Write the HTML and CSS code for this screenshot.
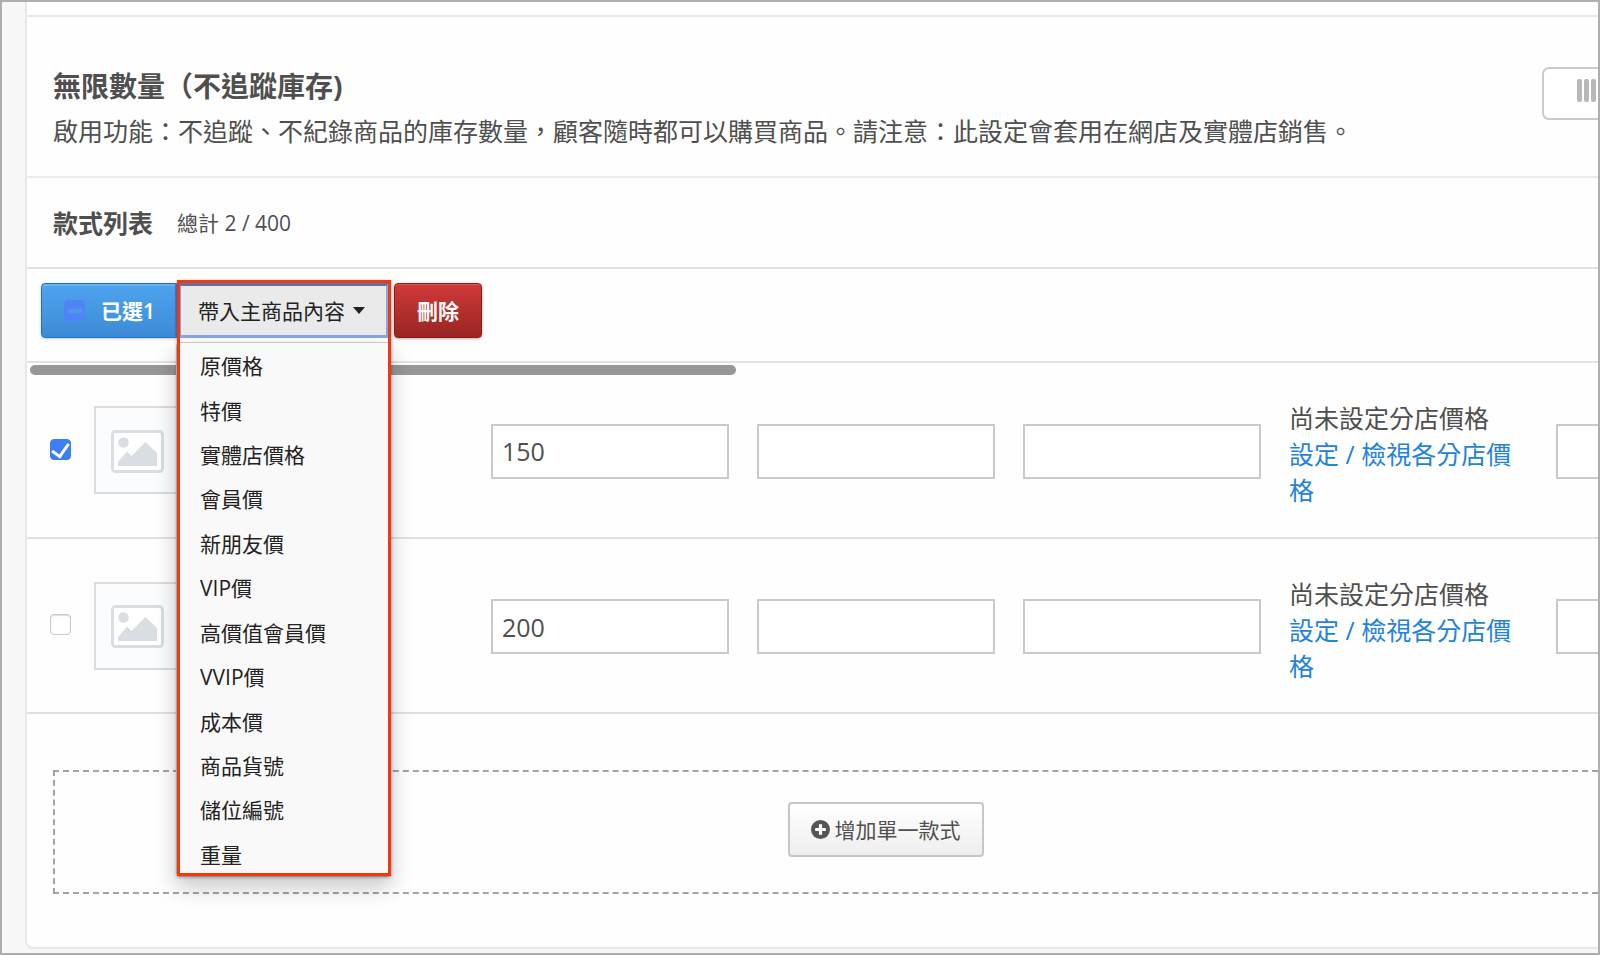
FILE: index.html
```html
<!DOCTYPE html>
<html lang="zh-Hant">
<head>
  <meta charset="UTF-8">
  <meta name="viewport" content="width=device-width, initial-scale=1.0">
  <title>款式列表</title>
  <link rel="stylesheet" href="styles.css">
</head>
<body>
  <svg class="sprite" aria-hidden="true">
    <symbol id="picture" viewBox="0 0 53 43">
      <rect x="1.5" y="1.5" width="50" height="40" rx="3" fill="#fff" stroke="#d9dee4" stroke-width="3"/>
      <circle cx="12.500" cy="12.500" r="5.300" fill="#d9dee4"/>
      <path d="M7 36V32L16 21.500L20.500 26L34.500 12L46 23V36Z" fill="#d9dee4"/>
    </symbol>
  </svg>
  <div class="frame">
    <main class="card">
      <div class="previous"></div>
      <section class="unlimited">
        <div>
          <h2 id="unlimited-title">無限數量（不追蹤庫存)</h2>
          <p>啟用功能：不追蹤、不紀錄商品的庫存數量，顧客隨時都可以購買商品。請注意：此設定會套用在網店及實體店銷售。</p>
        </div>
        <button class="switch" type="button" role="switch" aria-checked="false" aria-labelledby="unlimited-title">
          <span></span><span></span><span></span>
        </button>
      </section>

      <section class="list-head">
        <h3>款式列表</h3>
        <span>總計 2 / 400</span>
      </section>

      <div class="toolbar">
        <label class="btn btn-primary"><input class="partial" type="checkbox">已選1</label>
        <div class="dropdown">
          <button class="btn btn-toggle" type="button" aria-expanded="true">帶入主商品內容<span class="caret"></span></button>
          <ul class="menu">
            <li><a href="#">原價格</a></li>
            <li><a href="#">特價</a></li>
            <li><a href="#">實體店價格</a></li>
            <li><a href="#">會員價</a></li>
            <li><a href="#">新朋友價</a></li>
            <li><a href="#">VIP價</a></li>
            <li><a href="#">高價值會員價</a></li>
            <li><a href="#">VVIP價</a></li>
            <li><a href="#">成本價</a></li>
            <li><a href="#">商品貨號</a></li>
            <li><a href="#">儲位編號</a></li>
            <li><a href="#">重量</a></li>
          </ul>
          <div class="highlight"></div>
        </div>
        <button class="btn btn-danger" type="button">刪除</button>
      </div>

      <div class="table-wrap">
        <div class="scroll-thumb"></div>
        <table class="variants">
          <colgroup>
            <col class="col-check">
            <col class="col-thumb">
            <col class="col-price">
            <col class="col-price">
            <col class="col-price">
            <col class="col-store">
            <col class="col-price">
          </colgroup>
          <tbody>
            <tr>
              <td class="check"><input type="checkbox" checked></td>
              <td><div class="thumb"><svg><use href="#picture"/></svg></div></td>
              <td><input class="field" type="text" value="150"></td>
              <td><input class="field" type="text"></td>
              <td><input class="field" type="text"></td>
              <td class="store">尚未設定分店價格<br><a href="#">設定 / 檢視各分店價格</a></td>
              <td><input class="field" type="text"></td>
            </tr>
            <tr>
              <td class="check"><input type="checkbox"></td>
              <td><div class="thumb"><svg><use href="#picture"/></svg></div></td>
              <td><input class="field" type="text" value="200"></td>
              <td><input class="field" type="text"></td>
              <td><input class="field" type="text"></td>
              <td class="store">尚未設定分店價格<br><a href="#">設定 / 檢視各分店價格</a></td>
              <td><input class="field" type="text"></td>
            </tr>
          </tbody>
        </table>
      </div>

      <div class="add-box">
        <button class="btn btn-default" type="button">
          <svg viewBox="0 0 18 18"><circle cx="9" cy="9" r="9" fill="#555"/><path d="M9 4V14M4 9H14" stroke="#fff" stroke-width="3"/></svg>增加單一款式
        </button>
      </div>
    </main>
  </div>
</body>
</html>
```
FILE: styles.css
```css
* {
  margin: 0;
  padding: 0;
  box-sizing: border-box;
}

body {
  font-family: "Open Sans", "Noto Sans CJK TC", sans-serif;
  font-size: 25px;
  line-height: 36px;
  color: #4f4f4f;
}

button,
input {
  font: inherit;
  color: inherit;
}

a {
  color: #2383d9;
  text-decoration: none;
}

.sprite {
  display: none;
}

.frame {
  min-height: 100vh;
  border: 2px solid #aeaeae;
  padding: 0 0 4px 23px;
  background-color: #f7f7f7;
  overflow: hidden;
}

/* the card runs on past the right edge of the view */
.card {
  margin-right: -148px;
  border: 2px solid #e8e8e8;
  border-top: 0;
  border-radius: 0 0 8px 8px;
  background-color: #fefefe;
}

.previous {
  height: 15px;
  border-bottom: 2px solid #e8e8e8;
}

/* unlimited quantity */
.unlimited {
  display: flex;
  justify-content: space-between;
  align-items: flex-start;
  padding: 50px 26px 27px;
  border-bottom: 2px solid #ebebeb;
}
.unlimited h2 {
  font-size: 28px;
  line-height: 38px;
  font-weight: 700;
  margin-bottom: 8px;
}
.switch {
  display: flex;
  gap: 2px;
  width: 176px;
  height: 53px;
  padding: 10px 33px;
  border: 2px solid #cacaca;
  border-radius: 7px;
  background-color: #fff;
}
.switch span {
  width: 5px;
  height: 23px;
  border-radius: 2px;
  background-color: #b8b8b8;
}

/* list title */
.list-head {
  display: flex;
  align-items: center;
  gap: 24px;
  height: 91px;
  padding: 0 26px;
  border-bottom: 2px solid #e2e2e2;
  font-size: 21px;
}
.list-head h3 {
  font-size: 25px;
  font-weight: 700;
}

/* toolbar */
.toolbar {
  display: flex;
  padding: 14px;
  height: 94px;
  border-bottom: 2px solid #e2e2e2;
}
.btn {
  display: flex;
  align-items: center;
  height: 55px;
  padding: 0 21px;
  border: 2px solid #c6c6c6;
  border-radius: 4px;
  font-size: 21px;
  line-height: 30px;
  white-space: nowrap;
}
.btn-primary {
  gap: 16px;
  width: 137px;
  padding-left: 22px;
  border: 1px solid #1975b8;
  border-radius: 4px 0 0 4px;
  background-image: linear-gradient(#4ea4ef, #3d8ad6);
  box-shadow: inset 0 2px 0 #69b2f2, 0 1px 3px rgba(0, 0, 0, .2);
  color: #fff;
  font-weight: 600;
}
.partial {
  appearance: none;
  display: flex;
  align-items: center;
  justify-content: center;
  width: 21px;
  height: 21px;
  border-radius: 4px;
  background-color: #5084f6;
}
.partial::after {
  content: "";
  width: 14px;
  height: 4px;
  background-color: #479be0;
}
.dropdown {
  position: relative;
  margin-right: 5px;
}
.btn-toggle {
  gap: 8px;
  width: 211px;
  padding: 0 17px;
  border: 3px solid #8ba4e6;
  border-top-color: #5b72ad;
  border-radius: 0;
  background-color: #eaeaea;
  box-shadow: -3px 0 0 #3f7ddf;
  color: #222;
}
.caret {
  border: 6px solid transparent;
  border-top: 7px solid #222;
  border-bottom: 0;
}
.menu {
  position: absolute;
  top: 59px;
  left: -2px;
  z-index: 1;
  display: grid;
  grid-auto-rows: 1fr;
  width: 215px;
  height: 535px;
  border: 1px solid #c4c4c4;
  border-radius: 4px;
  background-color: #f9f9f9;
  box-shadow: 0 10px 22px rgba(0, 0, 0, .22);
  list-style: none;
}
.menu a {
  display: flex;
  align-items: center;
  height: 100%;
  padding: 2px 23px 0;
  font-size: 21px;
  line-height: 30px;
  color: #222;
}
.highlight {
  position: absolute;
  top: -3px;
  left: -1px;
  z-index: 2;
  width: 214px;
  height: 596px;
  border: 3px solid #ee3a0f;
  box-shadow: 0 1px 3px rgba(0, 0, 0, .4);
  pointer-events: none;
}
.btn-danger {
  border: 1px solid #9b1515;
  background-image: linear-gradient(#cf3a38, #9a2424);
  box-shadow: inset 0 1px 0 #d65a55, 0 1px 3px rgba(0, 0, 0, .3);
  padding: 0 22px;
  color: #fff;
  font-weight: 700;
}

/* variants */
.table-wrap {
  position: relative;
}
.scroll-thumb {
  position: absolute;
  top: 2px;
  left: 3px;
  width: 706px;
  height: 10px;
  border-radius: 5px;
  background-color: #979797;
}
.variants {
  table-layout: fixed;
  width: 100%;
  border-collapse: collapse;
}
.variants td {
  height: 175px;
  border-bottom: 2px solid #e0e0e0;
  vertical-align: middle;
}
.col-check {
  width: 67px;
}
.col-thumb {
  width: 397px;
}
.col-price {
  width: 266px;
}
.col-store {
  width: 267px;
}
.check input {
  appearance: none;
  display: block;
  width: 21px;
  height: 21px;
  margin: 0 0 2px 23px;
  border: 1px solid #c8c8c8;
  border-radius: 4px;
  background-color: #fff;
  box-shadow: inset 0 1px 1px #ddd;
}
.check input:checked {
  display: flex;
  justify-content: center;
  border-color: #3b7df5;
  background-color: #3b7ff7;
  box-shadow: none;
}
.check input:checked::after {
  content: "";
  width: 8px;
  height: 14px;
  margin-top: 1px;
  border: solid #fff;
  border-width: 0 3px 3px 0;
  transform: translateY(-1px) rotate(35deg);
}
.thumb {
  display: flex;
  align-items: center;
  justify-content: center;
  width: 88px;
  height: 88px;
  padding: 2px 2px 0 0;
  border: 2px solid #dcdcdc;
  background-color: #fbfcfe;
}
.thumb svg {
  width: 53px;
  height: 43px;
}
.field {
  display: block;
  width: 238px;
  height: 55px;
  margin-top: 2px;
  padding: 0 9px;
  border: 2px solid #c9c9c9;
  background-color: #fff;
}
.variants .store {
  padding: 8px 28px 0 0;
}

/* add variant */
.add-box {
  display: flex;
  justify-content: center;
  margin: 56px 26px 53px;
  padding: 30px 30px 35px;
  border: 2px dashed #a3a3a3;
}
.btn-default {
  gap: 5px;
  background-image: linear-gradient(#fff, #eee);
}
.btn-default svg {
  width: 19px;
  height: 19px;
}
```
